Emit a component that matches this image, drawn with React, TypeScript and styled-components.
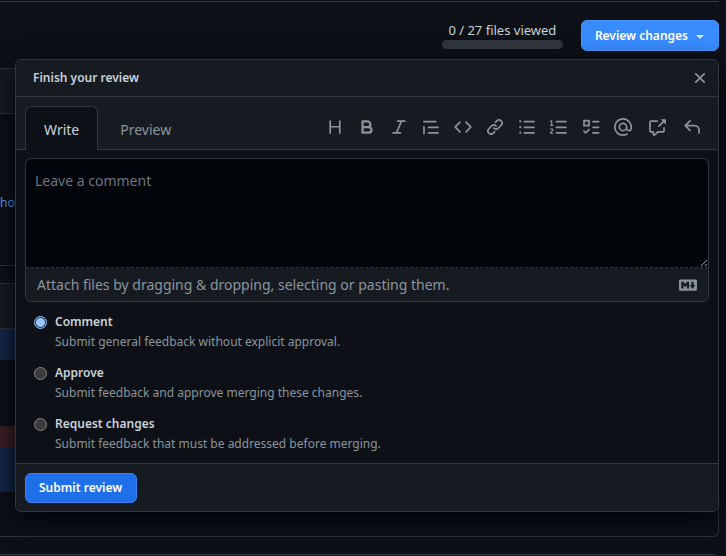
import React, { useState } from 'react';
import styled, { createGlobalStyle } from 'styled-components';

const c = {
  canvas: '#0d1117',
  subtle: '#161b22',
  inset: '#010409',
  border: '#30363d',
  text: '#c9d1d9',
  muted: '#8b949e',
  link: '#58a6ff',
};

const GlobalStyle = createGlobalStyle`
  * { box-sizing: border-box; }
  html { background: ${c.canvas}; overflow: hidden; }
  body { margin: 0; color: ${c.text}; font: 400 12px/20px "Noto Sans", sans-serif; }
  button, textarea { font-family: inherit; }
`;

const Page = styled.main`
  height: 100vh;
  overflow: hidden;
  padding: 1px 7px 0 0;
`;

const Toolbar = styled.header`
  position: relative;
  display: flex;
  justify-content: flex-end;
  align-items: flex-start;
  gap: 18px;
  height: 67px;
  padding-top: 18px;
  border-top: 1px solid ${c.border};
`;

const Progress = styled.div`
  display: flex;
  flex-direction: column;
  align-items: center;
  width: 121px;
  font-size: 13px;
`;

const Track = styled.div`
  width: 100%;
  height: 9px;
  border-radius: 6px;
  background: ${c.border};
`;

const PrimaryButton = styled.button<{ $bright?: boolean }>`
  display: inline-flex;
  align-items: center;
  gap: 8px;
  height: ${p => (p.$bright ? 31 : 30)}px;
  padding: 0 13px;
  border: 1px solid ${p => (p.$bright ? '#4a96ff' : '#3a80f0')};
  padding: 0 14px 0 13px;
  border-radius: 6px;
  background: ${p => (p.$bright ? '#388bfd' : '#1f6feb')};
  color: #fff;
  font-size: 12px;
  font-weight: 600;
  line-height: 20px;
  white-space: nowrap;
`;

const Caret = styled.span`
  border: 4px solid transparent;
  border-top-color: #d7e8ff;
  border-bottom: 0;
  margin-top: 2px;
`;

const Popup = styled.form`
  position: absolute;
  top: 57px;
  left: 15px;
  right: 0;
  border: 1px solid ${c.border};
  border-radius: 6px;
  background: ${c.canvas};
  box-shadow: 0 8px 24px #010409;
`;

const PopupHeader = styled.div`
  display: flex;
  align-items: center;
  justify-content: space-between;
  height: 37px;
  padding: 0 9px 0 17px;
  border-bottom: 1px solid ${c.border};
  border-radius: 6px 6px 0 0;
  background: ${c.subtle};
`;

const Title = styled.h2`
  margin: 0;
  font-size: 12px;
  font-weight: 600;
`;

const IconButton = styled.button`
  display: flex;
  justify-content: center;
  padding: 0;
  border: 0;
  background: none;
  color: ${c.muted};
`;

const TabBar = styled.div`
  display: flex;
  align-items: flex-end;
  justify-content: space-between;
  height: 53px;
  padding: 0 9px;
  border-bottom: 1px solid ${c.border};
  background: ${c.subtle};
`;

const Tabs = styled.div`
  display: flex;
  gap: 3px;
  margin-bottom: -1px;
`;

const Tab = styled.button<{ $active: boolean }>`
  height: 44px;
  padding: 1px 18px 0;
  border: 1px solid ${p => (p.$active ? c.border : 'transparent')};
  border-bottom: 0;
  border-radius: 6px 6px 0 0;
  background: ${p => (p.$active ? c.canvas : 'transparent')};
  color: ${p => (p.$active ? c.text : c.muted)};
  font-size: 14px;
`;

const Tools = styled.div`
  display: flex;
  align-items: center;
  height: 44px;
`;

const Tool = styled(IconButton)<{ $wide?: boolean }>`
  width: ${p => (p.$wide ? 35 : 32)}px;
`;

const Editor = styled.div`
  margin: 8px 9px 0;
  border: 1px solid ${c.border};
  border-radius: 6px;
  background: ${c.subtle};
`;

const Comment = styled.textarea`
  display: block;
  width: 100%;
  height: 109px;
  padding: 9px;
  border: 0;
  border-bottom: 1px dashed ${c.border};
  border-radius: 6px 6px 0 0;
  outline: none;
  background: ${c.inset};
  color: ${c.text};
  color-scheme: dark;
  font-size: 14px;
  line-height: 26px;
  &::placeholder { color: #6e7681; }
`;

const Attach = styled.div`
  display: flex;
  align-items: center;
  justify-content: space-between;
  height: 33px;
  padding: 0 11px;
  color: ${c.muted};
  font-size: 14px;
`;

const Options = styled.fieldset`
  display: grid;
  gap: 11px;
  margin: 0;
  padding: 10px 18px 9px;
  border: 0;
`;

const Option = styled.label`
  display: grid;
  grid-template-columns: 13px 1fr;
  column-gap: 8px;
  color: ${c.muted};
`;

const Radio = styled.input`
  appearance: none;
  width: 13px;
  height: 13px;
  margin: 4px 0 0;
  border: 1px solid #858585;
  border-radius: 50%;
  background: #3b3b3b;
  &:checked {
    border-color: #99c8ff;
    background: radial-gradient(circle, #99c8ff 0 4px, #2b2f36 5px);
  }
`;

const OptionText = styled.span`
  display: flex;
  flex-direction: column;
`;

const OptionName = styled.strong`
  color: ${c.text};
  font-weight: 600;
`;

const PopupFooter = styled.div`
  display: flex;
  padding: 9px 9px 8px;
  border-top: 1px solid ${c.border};
  border-radius: 0 0 6px 6px;
  background: ${c.subtle};
`;

const FileBox = styled.section`
  margin: 0 0 17px;
  border: 1px solid ${c.border};
  border-left: 0;
  border-radius: 0 6px 6px 0;
`;

const FileHeader = styled.div`
  height: 45px;
  border-bottom: 1px solid ${c.border};
  background: ${c.subtle};
`;

const FileBody = styled.div`
  height: 151px;
  padding-top: 79px;
`;

const FileLink = styled.a`
  color: ${c.link};
  text-decoration: none;
`;

const DiffRow = styled.div<{ $h: number; $tone?: 'hunk' | 'removed' }>`
  height: ${p => p.$h}px;
  background: ${p => (p.$tone === 'hunk' ? '#15294a' : p.$tone === 'removed' ? '#3c1f24' : 'transparent')};
`;

const paths = {
  heading: 'M3.75 2a.75.75 0 01.75.75V7h7V2.75a.75.75 0 011.5 0v10.5a.75.75 0 01-1.5 0V8.5h-7v4.75a.75.75 0 01-1.5 0V2.75A.75.75 0 013.75 2z',
  bold: 'M4 2a1 1 0 00-1 1v10a1 1 0 001 1h5.5a3.5 3.5 0 001.852-6.47A3.5 3.5 0 008.5 2H4zm4.5 5a1.5 1.5 0 100-3H5v3h3.5zM5 9v3h4.5a1.5 1.5 0 000-3H5z',
  italic: 'M6 2.75A.75.75 0 016.75 2h6.5a.75.75 0 010 1.5h-2.505l-3.858 9H9.25a.75.75 0 010 1.5h-6.5a.75.75 0 010-1.5h2.505l3.858-9H6.75A.75.75 0 016 2.75z',
  quote: 'M1.75 2.5a.75.75 0 000 1.5h10.5a.75.75 0 000-1.5H1.75zm4 5a.75.75 0 000 1.5h8.5a.75.75 0 000-1.5h-8.5zm0 5a.75.75 0 000 1.5h8.5a.75.75 0 000-1.5h-8.5zM2.5 7.75a.75.75 0 00-1.5 0v6a.75.75 0 001.5 0v-6z',
  code: 'M4.72 3.22a.75.75 0 011.06 1.06L2.06 8l3.72 3.72a.75.75 0 11-1.06 1.06L.47 8.53a.75.75 0 010-1.06l4.25-4.25zm6.56 0a.75.75 0 10-1.06 1.06L13.94 8l-3.72 3.72a.75.75 0 101.06 1.06l4.25-4.25a.75.75 0 000-1.06l-4.25-4.25z',
  link: 'M7.775 3.275a.75.75 0 001.06 1.06l1.25-1.25a2 2 0 112.83 2.83l-2.5 2.5a2 2 0 01-2.83 0 .75.75 0 00-1.06 1.06 3.5 3.5 0 004.95 0l2.5-2.5a3.5 3.5 0 00-4.95-4.95l-1.25 1.25zm-4.69 9.64a2 2 0 010-2.83l2.5-2.5a2 2 0 012.83 0 .75.75 0 001.06-1.06 3.5 3.5 0 00-4.95 0l-2.5 2.5a3.5 3.5 0 004.95 4.95l1.25-1.25a.75.75 0 00-1.06-1.06l-1.25 1.25a2 2 0 01-2.83 0z',
  bullets: 'M2 4a1 1 0 100-2 1 1 0 000 2zm3.75-1.5a.75.75 0 000 1.5h8.5a.75.75 0 000-1.5h-8.5zm0 5a.75.75 0 000 1.5h8.5a.75.75 0 000-1.5h-8.5zm0 5a.75.75 0 000 1.5h8.5a.75.75 0 000-1.5h-8.5zM3 8a1 1 0 11-2 0 1 1 0 012 0zm-1 6a1 1 0 100-2 1 1 0 000 2z',
  numbers: 'M2.003 2.5a.5.5 0 00-.723-.447l-1.003.5a.5.5 0 00.446.895l.28-.14V6H.5a.5.5 0 000 1h2.006a.5.5 0 100-1h-.503V2.5zM5 3.25a.75.75 0 01.75-.75h8.5a.75.75 0 010 1.5h-8.5A.75.75 0 015 3.25zm0 5a.75.75 0 01.75-.75h8.5a.75.75 0 010 1.5h-8.5A.75.75 0 015 8.25zm0 5a.75.75 0 01.75-.75h8.5a.75.75 0 010 1.5h-8.5a.75.75 0 01-.75-.75zM.924 10.32l.003-.004a.851.851 0 01.144-.153A.66.66 0 011.5 10c.195 0 .306.068.374.146a.57.57 0 01.128.376c0 .453-.269.682-.8 1.078l-.035.025C.692 11.98 0 12.495 0 13.5a.5.5 0 00.5.5h2.003a.5.5 0 000-1H1.146c.132-.197.351-.372.654-.597l.047-.035c.47-.35 1.156-.858 1.156-1.845 0-.365-.118-.744-.377-1.038-.268-.303-.658-.484-1.126-.484-.48 0-.84.202-1.068.392a1.858 1.858 0 00-.348.384l-.007.011-.002.004-.001.002-.001.001a.5.5 0 00.851.525z',
  tasks: 'M1.5 1.5A.5.5 0 001 2v5c0 .28.22.5.5.5h5A.5.5 0 007 7V2a.5.5 0 00-.5-.5h-5zM2.5 6V3h3v3h-3zM9.75 2.5a.75.75 0 000 1.5h5a.75.75 0 000-1.5h-5zm0 5a.75.75 0 000 1.5h5a.75.75 0 000-1.5h-5zm0 5a.75.75 0 000 1.5h5a.75.75 0 000-1.5h-5zM6.78 10.78a.75.75 0 10-1.06-1.06L3.25 12.19l-.97-.97a.75.75 0 10-1.06 1.06l1.5 1.5a.75.75 0 001.06 0l3-3z',
  mention: 'M4.75 2.37a6.5 6.5 0 006.5 11.26.75.75 0 01.75 1.298 8 8 0 113.994-7.273.754.754 0 01.006.095v1.5a2.75 2.75 0 01-5.072 1.475A4 4 0 1112 8v1.25a1.25 1.25 0 002.5 0V7.867a6.5 6.5 0 00-9.75-5.496V2.37zM10.5 8a2.5 2.5 0 10-5 0 2.5 2.5 0 005 0z',
  reference: 'M16 1.25v4.146a.25.25 0 01-.427.177L14.03 4.03l-3.75 3.75a.75.75 0 11-1.06-1.06l3.75-3.75-1.543-1.543A.25.25 0 0111.604 1h4.146a.25.25 0 01.25.25zM2.75 3.5a.25.25 0 00-.25.25v7.5c0 .138.112.25.25.25h2a.75.75 0 01.75.75v2.19l2.72-2.72a.75.75 0 01.53-.22h4.5a.25.25 0 00.25-.25v-2.5a.75.75 0 111.5 0v2.5A1.75 1.75 0 0113.25 13H9.06l-2.573 2.573A1.457 1.457 0 014 14.543V13H2.75A1.75 1.75 0 011 11.25v-7.5C1 2.784 1.784 2 2.75 2h5.5a.75.75 0 010 1.5h-5.5z',
  reply: 'M6.78 1.97a.75.75 0 010 1.06L3.81 6h6.44A4.75 4.75 0 0115 10.75v2.5a.75.75 0 01-1.5 0v-2.5a3.25 3.25 0 00-3.25-3.25H3.81l2.97 2.97a.75.75 0 11-1.06 1.06L1.47 7.28a.75.75 0 010-1.06l4.25-4.25a.75.75 0 011.06 0z',
  close: 'M3.72 3.72a.75.75 0 011.06 0L8 6.94l3.22-3.22a.75.75 0 111.06 1.06L9.06 8l3.22 3.22a.75.75 0 11-1.06 1.06L8 9.06l-3.22 3.22a.75.75 0 01-1.06-1.06L6.94 8 3.72 4.78a.75.75 0 010-1.06z',
  markdown: 'M14.85 3H1.15C.52 3 0 3.52 0 4.15v7.69C0 12.48.52 13 1.15 13h13.69c.64 0 1.15-.52 1.15-1.15v-7.7C16 3.52 15.48 3 14.85 3zM9 11H7V8L5.5 9.92 4 8v3H2V5h2l1.5 2L7 5h2v6zm2.99.5L9.5 8H11V5h2v3h1.5l-2.51 3.5z',
};

type IconName = keyof typeof paths;

const Icon = ({ name }: { name: IconName }) => (
  <svg width="18" height="18" viewBox="0 0 16 16" fill="currentColor" fillRule="evenodd" aria-hidden="true">
    <path d={paths[name]} />
  </svg>
);

const tools: { name: IconName; label: string; wide?: boolean }[] = [
  { name: 'heading', label: 'Heading' },
  { name: 'bold', label: 'Bold' },
  { name: 'italic', label: 'Italic' },
  { name: 'quote', label: 'Quote' },
  { name: 'code', label: 'Code' },
  { name: 'link', label: 'Link' },
  { name: 'bullets', label: 'Bulleted list' },
  { name: 'numbers', label: 'Numbered list' },
  { name: 'tasks', label: 'Task list' },
  { name: 'mention', label: 'Mention' },
  { name: 'reference', label: 'Reference', wide: true },
  { name: 'reply', label: 'Saved replies', wide: true },
];

const verdicts = [
  ['Comment', 'Submit general feedback without explicit approval.'],
  ['Approve', 'Submit feedback and approve merging these changes.'],
  ['Request changes', 'Submit feedback that must be addressed before merging.'],
];

export default function App() {
  const [tab, setTab] = useState('Write');
  const [verdict, setVerdict] = useState('Comment');
  return (
    <Page>
      <GlobalStyle />
      <Toolbar>
        <Progress>
          0 / 27 files viewed
          <Track />
        </Progress>
        <PrimaryButton $bright type="button">
          Review changes
          <Caret />
        </PrimaryButton>
        <Popup onSubmit={e => e.preventDefault()}>
          <PopupHeader>
            <Title>Finish your review</Title>
            <IconButton type="button" aria-label="Close">
              <Icon name="close" />
            </IconButton>
          </PopupHeader>
          <TabBar>
            <Tabs role="tablist">
              {['Write', 'Preview'].map(t => (
                <Tab key={t} type="button" role="tab" aria-selected={tab === t} $active={tab === t} onClick={() => setTab(t)}>
                  {t}
                </Tab>
              ))}
            </Tabs>
            <Tools>
              {tools.map(t => (
                <Tool key={t.name} type="button" aria-label={t.label} $wide={t.wide}>
                  <Icon name={t.name} />
                </Tool>
              ))}
            </Tools>
          </TabBar>
          <Editor>
            <Comment aria-label="Leave a comment" placeholder="Leave a comment" />
            <Attach>
              Attach files by dragging &amp; dropping, selecting or pasting them.
              <Icon name="markdown" />
            </Attach>
          </Editor>
          <Options>
            {verdicts.map(([name, hint]) => (
              <Option key={name}>
                <Radio type="radio" name="verdict" checked={verdict === name} onChange={() => setVerdict(name)} />
                <OptionText>
                  <OptionName>{name}</OptionName>
                  {hint}
                </OptionText>
              </Option>
            ))}
          </Options>
          <PopupFooter>
            <PrimaryButton type="submit">Submit review</PrimaryButton>
          </PopupFooter>
        </Popup>
      </Toolbar>
      <FileBox>
        <FileHeader />
        <FileBody>
          <FileLink href="#">how</FileLink>
        </FileBody>
      </FileBox>
      <FileBox>
        <FileHeader />
        <DiffRow $h={31} $tone="hunk" />
        <DiffRow $h={66} />
        <DiffRow $h={22} $tone="removed" />
        <DiffRow $h={44} $tone="hunk" />
        <DiffRow $h={44} />
      </FileBox>
      <FileBox>
        <FileHeader />
      </FileBox>
    </Page>
  );
}
